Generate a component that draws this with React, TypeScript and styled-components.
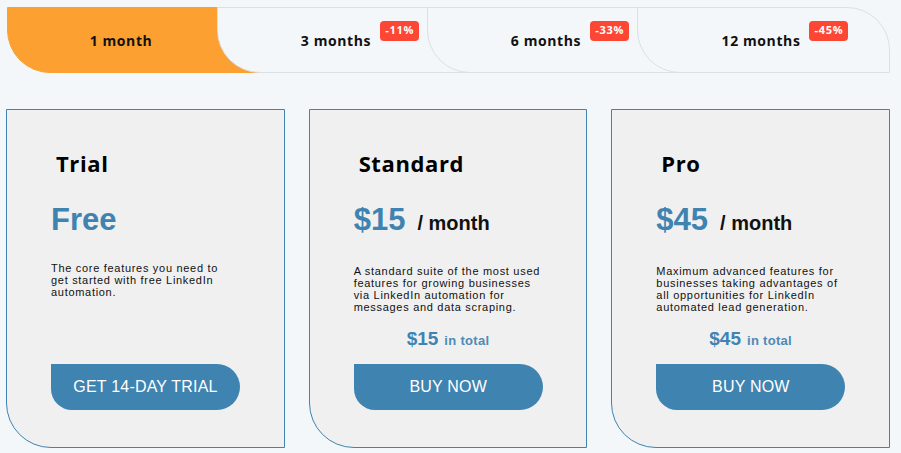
import React from "react";
import styled, { createGlobalStyle } from "styled-components";

const GlobalStyle = createGlobalStyle`
  html, body { margin: 0; padding: 0; }
  body {
    background: #f4f7fa;
    font-family: "Liberation Sans", Arial, sans-serif;
  }
`;

const Page = styled.div`
  display: flex;
  flex-direction: column;
  gap: 36px;
  padding: 7px 11px 5px 6px;
`;

const TabBar = styled.div`
  display: flex;
  margin-left: 1px;
  height: 66px;
`;

const Tab = styled.div<{ $active?: boolean; $first?: boolean; $last?: boolean; $pr: number }>`
  position: relative;
  flex: 0 0 253px;
  box-sizing: border-box;
  height: 66px;
  margin-left: ${(p) => (p.$first ? 0 : -43)}px;
  display: flex;
  align-items: center;
  justify-content: center;
  padding-right: ${(p) => p.$pr}px;
  background: ${(p) => (p.$active ? "#fca031" : "#f4f7fa")};
  border: 1px solid ${(p) => (p.$active ? "#fca031" : "#dcdfe3")};
  border-bottom-left-radius: 43px;
  border-top-right-radius: ${(p) => (p.$last ? 43 : 0)}px;
  cursor: pointer;
`;

const TabLabel = styled.span`
  position: relative;
  font-family: "Open Sans", "Noto Sans", sans-serif;
  font-weight: 700;
  font-size: 14px;
  letter-spacing: 0.6px;
  color: #111;
  white-space: nowrap;
`;

const Badge = styled.span`
  position: absolute;
  left: calc(100% + 9px);
  top: -10px;
  width: 39px;
  height: 20px;
  padding-bottom: 2px;
  box-sizing: border-box;
  border-radius: 4px;
  background: #fd4633;
  color: #fff;
  font-family: "Open Sans", "Noto Sans", sans-serif;
  font-weight: 700;
  font-size: 11px;
  letter-spacing: 0.7px;
  display: flex;
  align-items: center;
  justify-content: center;
`;

const Cards = styled.div`
  display: grid;
  grid-template-columns: repeat(3, 1fr);
  gap: 24px;
`;

const Card = styled.div`
  box-sizing: border-box;
  height: 339px;
  display: flex;
  flex-direction: column;
  align-items: flex-start;
  padding: 38px 0 37px 44px;
  background: #f0f0f0;
  border: 1px solid #3f83b0;
  border-bottom-left-radius: 45px;
`;

const Title = styled.h2`
  margin: 0 0 0 5px;
  font-family: "Open Sans", "Noto Sans", sans-serif;
  font-weight: 700;
  font-size: 22px;
  line-height: 30px;
  letter-spacing: 0.6px;
  color: #000;
`;

const PriceRow = styled.div`
  margin-top: 24px;
  display: flex;
  align-items: baseline;
  gap: 12px;
  line-height: 36px;
`;

const Price = styled.span`
  font-size: 31px;
  font-weight: 700;
  color: #3f83b0;
`;

const Per = styled.span`
  font-size: 20px;
  font-weight: 700;
  color: #111;
`;

const Desc = styled.p`
  margin: 24px 0 0;
  font-size: 11px;
  line-height: 12px;
  letter-spacing: 0.7px;
  color: #111;
  white-space: nowrap;
`;

const Total = styled.div`
  align-self: stretch;
  margin: 15px 0 0 -44px;
  text-align: center;
  line-height: 22px;
  font-weight: 700;
`;

const TotalPrice = styled.span`
  font-size: 19px;
  color: #3f83b0;
`;

const TotalLabel = styled.span`
  margin-left: 6px;
  font-size: 13px;
  letter-spacing: 0.3px;
  color: #4d8ab6;
`;

const Button = styled.button`
  margin-top: auto;
  width: 189px;
  height: 46px;
  border: none;
  border-radius: 0 23px 23px 21px;
  background: #3f83b0;
  color: #fff;
  font-family: "Liberation Sans", Arial, sans-serif;
  font-size: 16px;
  letter-spacing: 0.2px;
  cursor: pointer;
`;

const tabs = [
  { label: "1 month", pr: 25 },
  { label: "3 months", badge: "-11%", pr: 15 },
  { label: "6 months", badge: "-33%", pr: 15 },
  { label: "12 months", badge: "-45%", pr: 5 },
];

const plans = [
  {
    title: "Trial",
    price: "Free",
    lines: ["The core features you need to", "get started with free LinkedIn", "automation."],
    cta: "GET 14-DAY TRIAL",
  },
  {
    title: "Standard",
    price: "$15",
    per: "/ month",
    lines: [
      "A standard suite of the most used",
      "features for growing businesses",
      "via LinkedIn automation for",
      "messages and data scraping.",
    ],
    total: "$15",
    cta: "BUY NOW",
  },
  {
    title: "Pro",
    price: "$45",
    per: "/ month",
    lines: [
      "Maximum advanced features for",
      "businesses taking advantages of",
      "all opportunities for LinkedIn",
      "automated lead generation.",
    ],
    total: "$45",
    cta: "BUY NOW",
  },
];

export default function App() {
  return (
    <>
      <GlobalStyle />
      <Page>
        <TabBar>
          {tabs.map((t, i) => (
            <Tab key={t.label} $active={i === 0} $first={i === 0} $last={i === tabs.length - 1} $pr={t.pr}>
              <TabLabel>
                {t.label}
                {t.badge && <Badge>{t.badge}</Badge>}
              </TabLabel>
            </Tab>
          ))}
        </TabBar>
        <Cards>
          {plans.map((p) => (
            <Card key={p.title}>
              <Title>{p.title}</Title>
              <PriceRow>
                <Price>{p.price}</Price>
                {p.per && <Per>{p.per}</Per>}
              </PriceRow>
              <Desc>
                {p.lines.map((l, i) => (
                  <React.Fragment key={i}>
                    {l}
                    {i < p.lines.length - 1 && <br />}
                  </React.Fragment>
                ))}
              </Desc>
              {p.total && (
                <Total>
                  <TotalPrice>{p.total}</TotalPrice>
                  <TotalLabel>in total</TotalLabel>
                </Total>
              )}
              <Button>{p.cta}</Button>
            </Card>
          ))}
        </Cards>
      </Page>
    </>
  );
}
